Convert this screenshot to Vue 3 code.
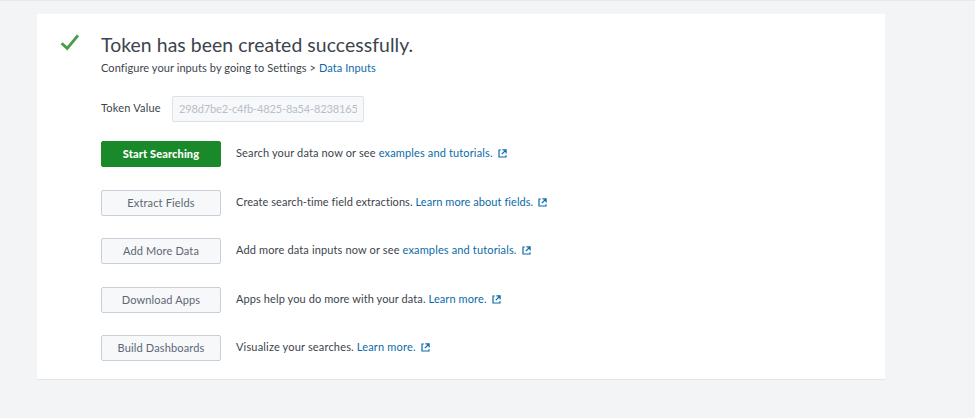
<script setup>
const token = '298d7be2-c4fb-4825-8a54-8238165'
const actions = [
  { label: 'Start Searching', primary: true, text: 'Search your data now or see', link: 'examples and tutorials.' },
  { label: 'Extract Fields', text: 'Create search-time field extractions.', link: 'Learn more about fields.' },
  { label: 'Add More Data', text: 'Add more data inputs now or see', link: 'examples and tutorials.' },
  { label: 'Download Apps', text: 'Apps help you do more with your data.', link: 'Learn more.' },
  { label: 'Build Dashboards', text: 'Visualize your searches.', link: 'Learn more.' },
]
</script>

<template>
  <main class="page">
    <section class="card">
      <svg class="check" viewBox="0 0 20 18" aria-hidden="true">
        <path d="M1.6 10.2 7.2 15.4 18 2.4" />
      </svg>
      <div class="content">
        <h1>Token has been created successfully.</h1>
        <p class="sub">Configure your inputs by going to Settings &gt; <a>Data Inputs</a></p>
        <div class="token">
          <label>Token Value</label>
          <div class="field"><span>{{ token }}</span></div>
        </div>
        <ul>
          <li v-for="a in actions" :key="a.label">
            <button :class="{ primary: a.primary }">{{ a.label }}</button>
            <p class="desc">
              {{ a.text }} <a>{{ a.link }}</a>
              <svg class="ext" viewBox="0 0 9 9" aria-hidden="true">
                <path d="M2.8 1H1v7h7V6.2M4.4 .9H8.1V4.6M8 1 3.8 5.2" />
              </svg>
            </p>
          </li>
        </ul>
      </div>
    </section>
  </main>
</template>

<style>
body {
  background: #fff;
}
</style>

<style scoped>
.page {
  box-sizing: border-box;
  width: 975px;
  height: 418px;
  padding: 12.5px 0 0 37px;
  background: #f2f4f5;
  border-top: 1px solid #e6e8ea;
  font-family: Lato, "Liberation Sans", sans-serif;
  font-variant-ligatures: none;
  color: #3c444d;
  overflow: hidden;
}
.card {
  box-sizing: border-box;
  display: flex;
  width: 848px;
  height: 366.5px;
  padding: 19.5px 0 0 23px;
  background: #fff;
  border-bottom: 1px solid #e1e6eb;
}
.check {
  flex: none;
  width: 20px;
  height: 18px;
  margin-right: 21px;
}
.check path {
  fill: none;
  stroke: #4a9c4a;
  stroke-width: 2.9;
}
h1 {
  margin: 0;
  font-size: 19.4px;
  line-height: 24px;
  font-weight: 400;
  letter-spacing: 0.06px;
  white-space: nowrap;
}
p {
  margin: 0;
}
a {
  color: #0b6ba8;
}
.sub {
  margin-top: 3px;
  font-size: 11px;
  line-height: 16px;
  letter-spacing: 0.08px;
}
.token {
  display: flex;
  align-items: center;
  gap: 11px;
  height: 26px;
  margin-top: 20px;
  font-size: 11px;
}
.token label {
  width: 60px;
  margin-top: -3px;
  letter-spacing: 0.2px;
  white-space: nowrap;
}
.field {
  box-sizing: border-box;
  width: 192px;
  height: 26px;
  padding: 0 6px;
  border: 1px solid #dce1e7;
  border-radius: 2px;
  background: #f7f8fa;
  color: #b6bfc9;
  line-height: 24px;
  letter-spacing: -0.13px;
}
.field span {
  display: block;
  overflow: hidden;
  white-space: nowrap;
}
ul {
  display: grid;
  grid-auto-rows: 48.5px;
  margin: 19px 0 0;
  padding: 0;
  list-style: none;
}
li {
  display: flex;
  align-items: flex-start;
  gap: 15px;
}
button {
  box-sizing: border-box;
  width: 120px;
  height: 26px;
  padding: 0;
  border: 1px solid #c9d0da;
  border-radius: 2px;
  background: #f7f8fa;
  color: #5c6773;
  font: 400 11px/24px Lato, "Liberation Sans", sans-serif;
  letter-spacing: 0.15px;
}
.primary {
  border-color: #1a8929;
  background: #1a8929;
  color: #fff;
  font-weight: 900;
  letter-spacing: 0.12px;
}
.desc {
  font-size: 11px;
  line-height: 24px;
  letter-spacing: 0.14px;
  white-space: nowrap;
}
li:nth-child(2) .desc {
  letter-spacing: 0.06px;
}
li:nth-child(4) .desc {
  letter-spacing: 0.1px;
}
li:nth-child(5) .desc {
  letter-spacing: 0.17px;
}
.ext {
  width: 9px;
  height: 9px;
  margin-left: 5px;
  vertical-align: -1px;
}
.ext path {
  fill: none;
  stroke: #0b6ba8;
  stroke-width: 1.2;
}
</style>
